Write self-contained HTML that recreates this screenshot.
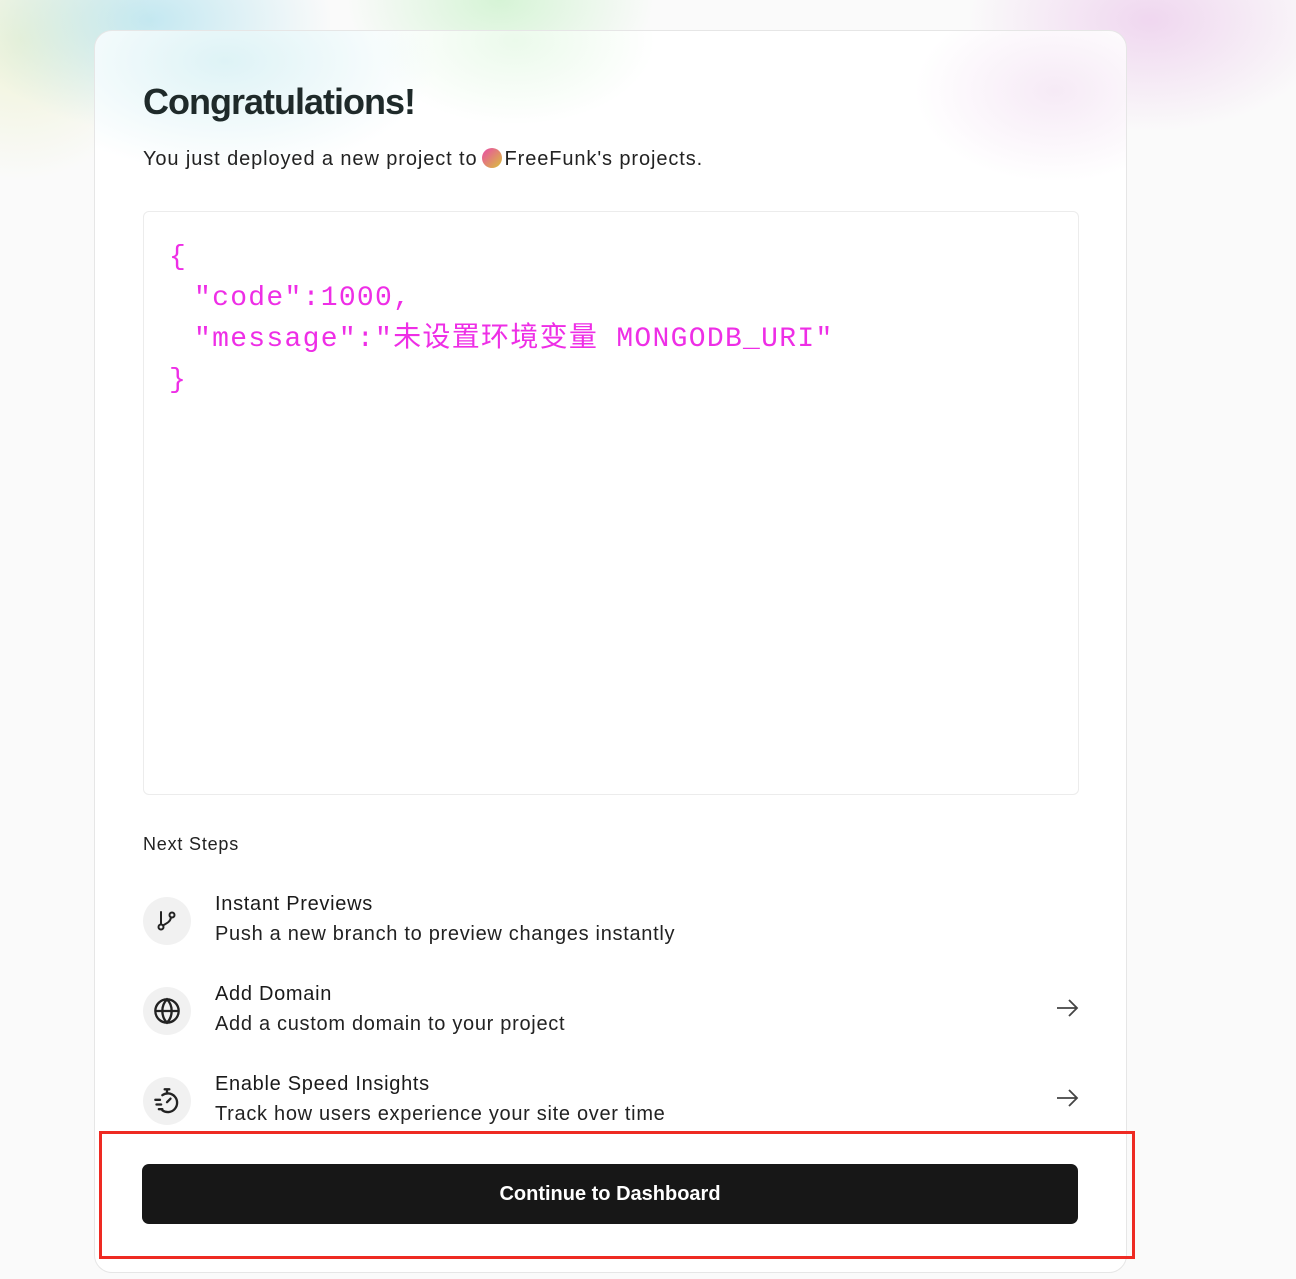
<!DOCTYPE html>
<html><head><meta charset="utf-8"><style>
*{box-sizing:border-box;margin:0;padding:0}
body{width:1296px;height:1279px;overflow:hidden;background:#fafafa;font-family:"Liberation Sans",Arial,sans-serif;position:relative;color:#171717}
.bg{position:absolute;inset:0;background:
radial-gradient(ellipse 260px 160px at 150px 20px,rgba(160,220,235,.6),transparent 70%),
radial-gradient(ellipse 220px 140px at 500px 0px,rgba(190,240,190,.6),transparent 70%),
radial-gradient(ellipse 200px 200px at 20px 40px,rgba(235,240,200,.7),transparent 70%),
radial-gradient(ellipse 260px 160px at 1150px 20px,rgba(235,200,235,.7),transparent 70%)}
.card{position:absolute;left:94px;top:30px;width:1033px;height:1243px;border:1px solid #e6e6e6;border-radius:18px;background:
radial-gradient(ellipse 300px 160px at 130px 30px,rgba(200,235,240,.6),transparent 70%),
radial-gradient(ellipse 200px 120px at 420px 10px,rgba(215,245,215,.5),transparent 70%),
radial-gradient(ellipse 200px 130px at 960px 60px,rgba(240,220,240,.6),transparent 70%),#fff}
h1{position:absolute;left:48px;top:50px;font-size:36px;font-weight:700;letter-spacing:-1px;color:#1f2a2a}
.sub{position:absolute;left:48px;top:117px;font-size:20px;color:#222;letter-spacing:0.9px}
.dot{display:inline-block;width:20px;height:20px;border-radius:50%;background:linear-gradient(135deg,#e94aa8,#d9c23a);vertical-align:-3px;margin:0 3px 0 4px}
.code{position:absolute;left:48px;top:180px;width:936px;height:584px;border:1px solid #ececec;border-radius:6px;background:#fff;padding:25px 0 0 25px;font-family:"Liberation Mono","Noto Sans CJK SC",monospace;font-size:28px;line-height:41px;color:#ee2ee6;white-space:pre;letter-spacing:1.3px}
.code .in{padding-left:25px}
.ns{position:absolute;left:48px;top:803px;font-size:18px;color:#222;letter-spacing:0.8px}
.item{position:absolute;left:48px;width:936px;height:60px}
.ic{position:absolute;left:0;top:3px;width:48px;height:48px;border-radius:50%;background:#f1f1f1;display:flex;align-items:center;justify-content:center}
.t{position:absolute;left:72px;top:-5px;font-size:20px;color:#1a1a1a;line-height:30px;letter-spacing:0.7px}
.t div+div{color:#222}
.ar{position:absolute;right:0;top:12px}
.btn{position:absolute;left:142px;top:1164px;width:936px;height:60px;background:#171717;border-radius:7px;color:#fff;font-size:20px;font-weight:700;display:flex;align-items:center;justify-content:center}
.red{position:absolute;left:99px;top:1131px;width:1036px;height:128px;border:3px solid #ee2a22}
</style></head><body>
<div class="bg"></div>
<div class="card">
<h1>Congratulations!</h1>
<div class="sub">You just deployed a new project to<span class="dot"></span>FreeFunk's projects.</div>
<div class="code"><div>{</div><div class="in">"code":1000,</div><div class="in">"message":"未设置环境变量 MONGODB_URI"</div><div>}</div></div>
<div class="ns">Next Steps</div>
<div class="item" style="top:863px"><div class="ic"><svg width="24" height="24" viewBox="0 0 24 24" fill="none" stroke="#222" stroke-width="2" stroke-linecap="round"><path d="M6 3v12"/><circle cx="6" cy="18" r="2.5"/><circle cx="17" cy="6" r="2.5"/><path d="M16 8.5c-1 5-5 6-8 8"/></svg></div><div class="t"><div>Instant Previews</div><div>Push a new branch to preview changes instantly</div></div></div>
<div class="item" style="top:953px"><div class="ic"><svg width="28" height="28" viewBox="0 0 24 24" fill="none" stroke="#222" stroke-width="2"><circle cx="12" cy="12" r="10"/><path d="M2 12h20M12 2c3 3 4 6.5 4 10s-1 7-4 10c-3-3-4-6.5-4-10s1-7 4-10z"/></svg></div><div class="t"><div>Add Domain</div><div>Add a custom domain to your project</div></div><svg class="ar" width="24" height="24" viewBox="0 0 24 24" fill="none" stroke="#444" stroke-width="1.8"><path d="M2 12h20M14 4l8 8-8 8"/></svg></div>
<div class="item" style="top:1043px"><div class="ic"><svg width="28" height="28" viewBox="0 0 24 24" fill="none" stroke="#222" stroke-width="2" stroke-linecap="round"><path d="M10 2h4M12 2v3"/><path d="M8 7a8 8 0 1 1 0 13"/><path d="M12 13l3-3"/><path d="M2 11h4M3 15h4M5 19h3"/></svg></div><div class="t"><div>Enable Speed Insights</div><div>Track how users experience your site over time</div></div><svg class="ar" width="24" height="24" viewBox="0 0 24 24" fill="none" stroke="#444" stroke-width="1.8"><path d="M2 12h20M14 4l8 8-8 8"/></svg></div>
</div>
<div class="btn">Continue to Dashboard</div>
<div class="red"></div>
</body></html>
